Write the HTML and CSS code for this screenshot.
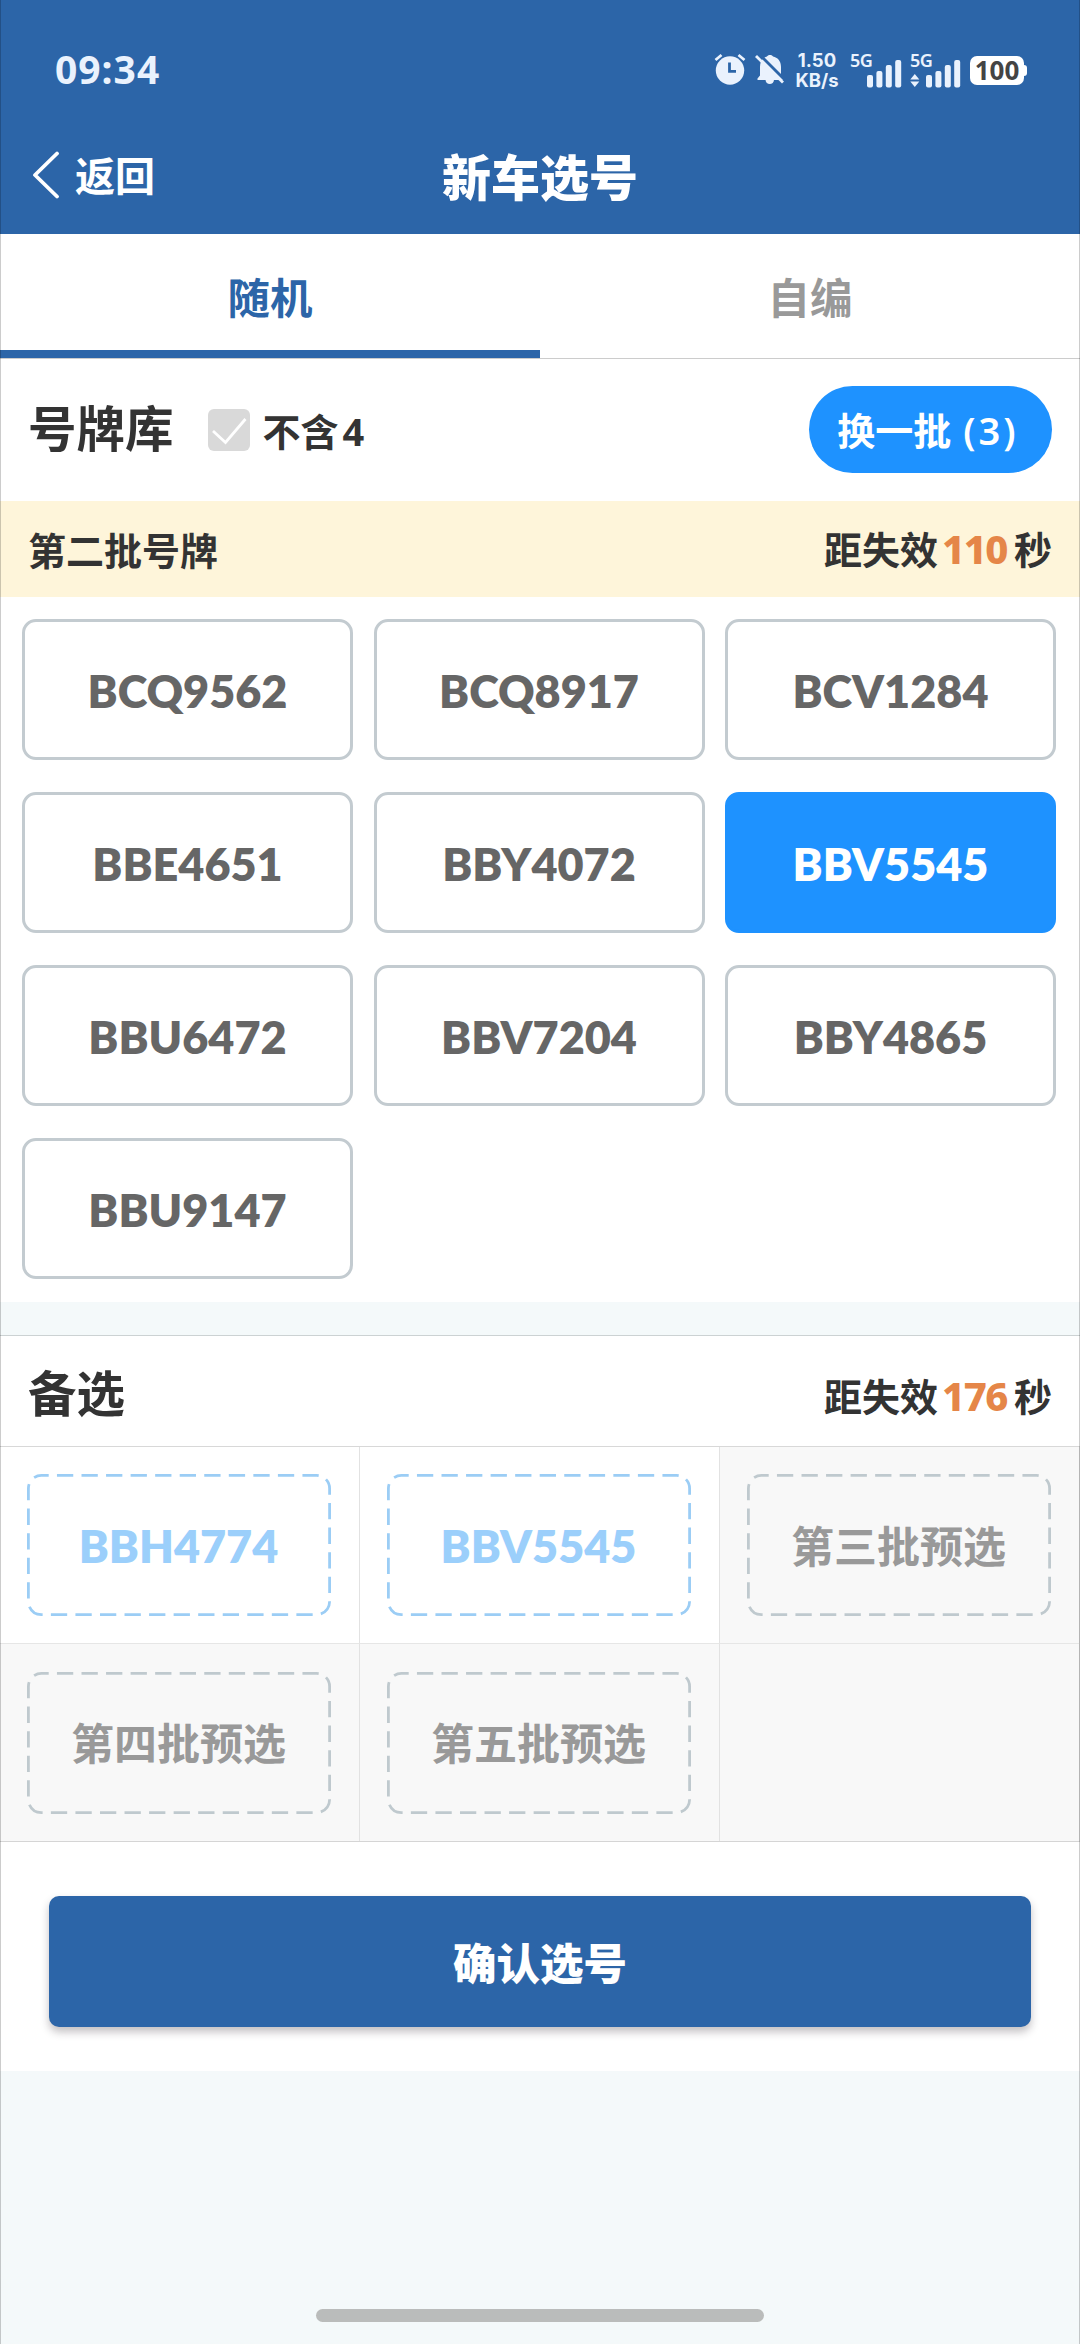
FILE: index.html
```html
<!DOCTYPE html>
<html lang="zh-CN">
<head>
  <meta charset="UTF-8">
  <meta name="viewport" content="width=device-width, initial-scale=1.0">
  <title>新车选号</title>
  <link rel="stylesheet" href="styles.css">
</head>
<body>
  <div class="page">

    <!-- 顶部 -->
    <header class="header">
      <div class="status-bar">
        <span class="time">09:34</span>
        <div class="status-icons">
          <svg class="icon-alarm" width="32" height="32" viewBox="0 0 32 32">
            <circle cx="16" cy="17.500" r="14.200" fill="#eaf2fd"/>
            <path d="M1.500 7 L7.500 2 M24.500 2 L30.500 7" stroke="#eaf2fd" stroke-width="2.800" fill="none"/>
            <path d="M15.500 9.500 V18.300 H22" stroke="#2c65a8" stroke-width="2.800" fill="none"/>
          </svg>
          <svg class="icon-mute" width="30" height="34" viewBox="0 0 30 34">
            <path d="M2.500 27 V25.500 L5 22.500 V14 C5 8 8 4.500 12 3.600 C12.500 1.500 17.500 1.500 18 3.600 C22.500 4.500 26 8 26 14 V22.500 L28 25.500 V27 Z" fill="#eaf2fd"/>
            <path d="M10.500 26.500 H19 C19 32.500 10.500 32.500 10.500 26.500 Z" fill="#eaf2fd"/>
            <path d="M3.500 0.500 L31 28" stroke="#2c65a8" stroke-width="3"/>
            <path d="M1 3 L28 29.500" stroke="#eaf2fd" stroke-width="2.800"/>
          </svg>
          <div class="net-speed"><span>1.50</span><span>KB/s</span></div>
          <div class="signal">
            <span>5G</span>
            <svg width="35" height="28" viewBox="0 0 35 28" fill="#eaf2fd">
              <rect x="0" y="15" width="6" height="12.500" rx="2"/>
              <rect x="9.400" y="11" width="6" height="16.500" rx="2"/>
              <rect x="18.800" y="5" width="6" height="22.500" rx="2"/>
              <rect x="28.200" y="0" width="6" height="27.500" rx="2"/>
            </svg>
          </div>
          <div class="signal signal-second">
            <span>5G</span>
            <svg width="51" height="28" viewBox="0 0 51 28" fill="#eaf2fd">
              <path d="M4.800 14 L9.300 19.500 H0.300 Z M0.300 21.500 H9.300 L4.800 27 Z"/>
              <rect x="16" y="15" width="6" height="12.500" rx="2"/>
              <rect x="25.400" y="11" width="6" height="16.500" rx="2"/>
              <rect x="34.800" y="5" width="6" height="22.500" rx="2"/>
              <rect x="44.200" y="0" width="6" height="27.500" rx="2"/>
            </svg>
          </div>
          <div class="battery">100</div>
        </div>
      </div>
      <nav class="nav-bar">
        <a class="back">
          <svg width="28" height="48" viewBox="0 0 28 48">
            <path d="M25 2.500 L3 24 L25 45.500" fill="none" stroke="#fff" stroke-width="3.800" stroke-linecap="round" stroke-linejoin="round"/>
          </svg>
          <span>返回</span>
        </a>
        <h1>新车选号</h1>
      </nav>
    </header>

    <!-- 标签 -->
    <div class="tabs">
      <div class="tab active">随机</div>
      <div class="tab">自编</div>
    </div>

    <!-- 号牌库 -->
    <section class="pool">
      <div class="pool-head">
        <h2>号牌库</h2>
        <span class="checkbox">
          <svg width="42" height="42" viewBox="0 0 42 42">
            <path d="M5 22 L17.500 33.500 L37.500 10" fill="none" stroke="#fff" stroke-width="2.800"/>
          </svg>
        </span>
        <span class="check-label">不含<b>4</b></span>
        <button class="refresh">换一批<span>(3)</span></button>
      </div>
      <div class="batch-bar">
        <span>第二批号牌</span>
        <span>距失效<b>110</b>秒</span>
      </div>
      <div class="plates">
        <div class="plate">BCQ9562</div>
        <div class="plate">BCQ8917</div>
        <div class="plate">BCV1284</div>
        <div class="plate">BBE4651</div>
        <div class="plate">BBY4072</div>
        <div class="plate selected">BBV5545</div>
        <div class="plate">BBU6472</div>
        <div class="plate">BBV7204</div>
        <div class="plate">BBY4865</div>
        <div class="plate">BBU9147</div>
      </div>
    </section>

    <!-- 备选 -->
    <section class="backup">
      <div class="backup-head">
        <h2>备选</h2>
        <span class="countdown">距失效<b>176</b>秒</span>
      </div>
      <div class="slots">
        <div class="slot filled">
          <div class="slot-box"><svg class="dash" viewBox="0 0 304 142"><rect x="1.400" y="1.400" width="301.200" height="139.200" rx="13"/></svg><span>BBH4774</span></div>
        </div>
        <div class="slot filled">
          <div class="slot-box"><svg class="dash" viewBox="0 0 304 142"><rect x="1.400" y="1.400" width="301.200" height="139.200" rx="13"/></svg><span>BBV5545</span></div>
        </div>
        <div class="slot">
          <div class="slot-box"><svg class="dash" viewBox="0 0 304 142"><rect x="1.400" y="1.400" width="301.200" height="139.200" rx="13"/></svg><span>第三批预选</span></div>
        </div>
        <div class="slot">
          <div class="slot-box"><svg class="dash" viewBox="0 0 304 142"><rect x="1.400" y="1.400" width="301.200" height="139.200" rx="13"/></svg><span>第四批预选</span></div>
        </div>
        <div class="slot">
          <div class="slot-box"><svg class="dash" viewBox="0 0 304 142"><rect x="1.400" y="1.400" width="301.200" height="139.200" rx="13"/></svg><span>第五批预选</span></div>
        </div>
        <div class="slot"></div>
      </div>
    </section>

    <div class="submit">
      <button class="confirm">确认选号</button>
    </div>

    <div class="home-indicator"></div>
  </div>
</body>
</html>
```
FILE: styles.css
```css
* {
  box-sizing: border-box;
}

body {
  margin: 0;
  background: #f4f9fa;
  color: #333;
  font-family: "Noto Sans", "Noto Sans CJK SC", sans-serif;
  font-weight: 700;
}

h1, h2 {
  margin: 0;
  font-weight: 700;
}

button {
  border: none;
  padding: 0;
  font-family: inherit;
  font-weight: 700;
  color: #fff;
}

.page {
  position: relative;
  display: flex;
  flex-direction: column;
  width: 1080px;
  height: 2344px;
  overflow: hidden;
}

/* thin line down both sides of the screen */
.page::after {
  content: "";
  position: absolute;
  inset: 0;
  border: solid rgba(0, 0, 0, 0.2);
  border-width: 0 1px;
  pointer-events: none;
}

/* header */
.header {
  height: 234px;
  background: #2c65a8;
  color: #fff;
}

.status-bar {
  display: flex;
  justify-content: space-between;
  height: 118px;
  padding: 50px 53px 0 55px;
  color: #eaf2fd;
}

.time {
  font-size: 39px;
  line-height: 37px;
  letter-spacing: 1px;
}

.status-icons {
  display: flex;
  align-items: flex-start;
}

.icon-alarm {
  margin-top: 3px;
}

.icon-mute {
  margin: 3px 0 0 9px;
}

.net-speed {
  display: flex;
  flex-direction: column;
  align-items: center;
  width: 46px;
  margin-left: 9px;
  font-family: Inter, sans-serif;
  font-size: 18.500px;
  line-height: 20px;
}

.signal {
  display: flex;
  align-items: flex-start;
  margin-left: 10px;
}

.signal span {
  width: 17px;
  font-size: 18px;
  font-weight: 600;
  line-height: 20px;
  letter-spacing: -0.500px;
}

.signal svg {
  margin-top: 10px;
}

.signal-second {
  margin-left: 8px;
}

.signal-second span {
  width: 0;
}

.battery {
  position: relative;
  width: 54px;
  height: 29px;
  margin: 6px 3px 0 9px;
  border-radius: 7px;
  background: #fff;
  color: #444;
  font-size: 26px;
  line-height: 29px;
  text-align: center;
}

.battery::after {
  content: "";
  position: absolute;
  top: 9px;
  right: -3px;
  width: 3px;
  height: 11px;
  border-radius: 0 3px 3px 0;
  background: #fff;
}

.nav-bar {
  display: grid;
  grid-template-columns: 1fr auto 1fr;
  align-items: center;
  height: 114px;
  padding: 0 32px;
}

.back {
  display: flex;
  align-items: center;
  gap: 15px;
  font-size: 40px;
}

.back span {
  padding-bottom: 2px;
}

.nav-bar h1 {
  padding-bottom: 2px;
  font-size: 49px;
  font-weight: 900;
}

/* tabs */
.tabs {
  display: flex;
  height: 125px;
  border-bottom: 1px solid #ccc;
}

.tab {
  flex: 1;
  height: 124px;
  padding-top: 4px;
  border-bottom: 8px solid transparent;
  background: #fff;
  background-clip: padding-box;
  color: #999;
  font-size: 42.500px;
  line-height: 120px;
  text-align: center;
}

.tab.active {
  color: #2c65a8;
  border-bottom-color: #2c65a8;
}

.tabs,
.pool,
.backup,
.submit {
  background: #fff;
}

/* pool */
.pool {
  height: 943px;
}

.pool-head {
  display: flex;
  align-items: center;
  height: 141px;
  padding: 0 28px;
}

.pool-head h2,
.backup-head h2 {
  font-size: 48.500px;
  line-height: 60px;
}

.pool-head h2 {
  padding-bottom: 3px;
}

.checkbox {
  width: 42px;
  height: 42px;
  margin-left: 34px;
  border-radius: 6px;
  background: #d9d9d9;
}

.checkbox svg {
  display: block;
}

.check-label {
  margin-left: 13px;
  font-size: 38px;
}

.check-label b {
  margin-left: 4px;
  font-weight: 700;
}

.refresh {
  width: 243px;
  height: 87px;
  margin-left: auto;
  padding-bottom: 2px;
  border-radius: 44px;
  background: #1e92ff;
  font-size: 38px;
}

.refresh span {
  margin: 0 5px 0 12px;
  font-weight: 600;
  letter-spacing: 3px;
}

.batch-bar {
  display: flex;
  align-items: center;
  justify-content: space-between;
  height: 96px;
  margin-top: 1px;
  padding: 0 28px 2px;
  background: #fef5da;
  font-size: 38px;
}

.batch-bar b,
.countdown b {
  margin: 0 7px 0 4px;
  color: #e58648;
  font-size: 40px;
  font-weight: 800;
  letter-spacing: -1.500px;
}

.plates {
  display: grid;
  grid-template-columns: repeat(3, 331px);
  justify-content: space-between;
  row-gap: 32px;
  padding: 22px 24px 0 22px;
}

.plate {
  display: flex;
  align-items: center;
  justify-content: center;
  height: 141px;
  padding-top: 3px;
  border: 3px solid #c3cbd0;
  border-radius: 14px;
  color: #666;
  font-family: Lato, "Noto Sans", sans-serif;
  font-size: 45px;
  font-weight: 800;
}

.plate.selected {
  border-color: #1e92ff;
  background: #1e92ff;
  color: #fff;
}

/* backup */
.backup {
  margin-top: 33px;
  border-top: 1px solid #ccd2d3;
  border-bottom: 1px solid #d5d5d5;
}

.backup-head {
  display: flex;
  align-items: center;
  justify-content: space-between;
  height: 111px;
  padding: 4px 28px 0;
  border-bottom: 1px solid #d8d8d8;
}

.countdown {
  padding-top: 4px;
  font-size: 38px;
}

.slots {
  display: grid;
  grid-template-columns: 360px 360px 360px;
  grid-auto-rows: 197px;
}

.slot {
  display: flex;
  align-items: center;
  justify-content: center;
  padding-right: 2px;
  border-right: 1px solid #e2e2e2;
  border-bottom: 1px solid #e6e6e6;
  background: #f8f8f8;
  color: #999;
}

.slot:nth-child(n + 4) {
  border-bottom: none;
}

.slot-box {
  position: relative;
  display: flex;
  align-items: center;
  justify-content: center;
  width: 304px;
  height: 142px;
  padding-bottom: 2px;
  font-size: 43px;
}

/* dashes are longer than the ones a dashed border gives */
.dash {
  position: absolute;
  inset: 0;
  fill: none;
  stroke: #bfc9ce;
  stroke-width: 2.800;
  stroke-dasharray: 16.300 8.250;
  stroke-dashoffset: 9;
}

.slot.filled {
  background: #fff;
  color: #9bcffb;
}

.slot.filled .slot-box {
  padding-top: 4px;
  font-family: Lato, "Noto Sans", sans-serif;
  font-size: 45px;
  font-weight: 800;
}

.slot.filled .dash {
  stroke: #9bcdf5;
}

/* submit */
.submit {
  height: 229px;
  padding: 54px 49px 0;
}

.confirm {
  display: block;
  width: 982px;
  height: 131px;
  border-radius: 10px;
  background: #2c65a8;
  box-shadow: 0 5px 8px rgba(40, 30, 40, 0.28);
  font-size: 43.500px;
  font-weight: 900;
}

.home-indicator {
  width: 448px;
  height: 13px;
  margin: auto auto 22px;
  border-radius: 7px;
  background: #babcbb;
}
```
